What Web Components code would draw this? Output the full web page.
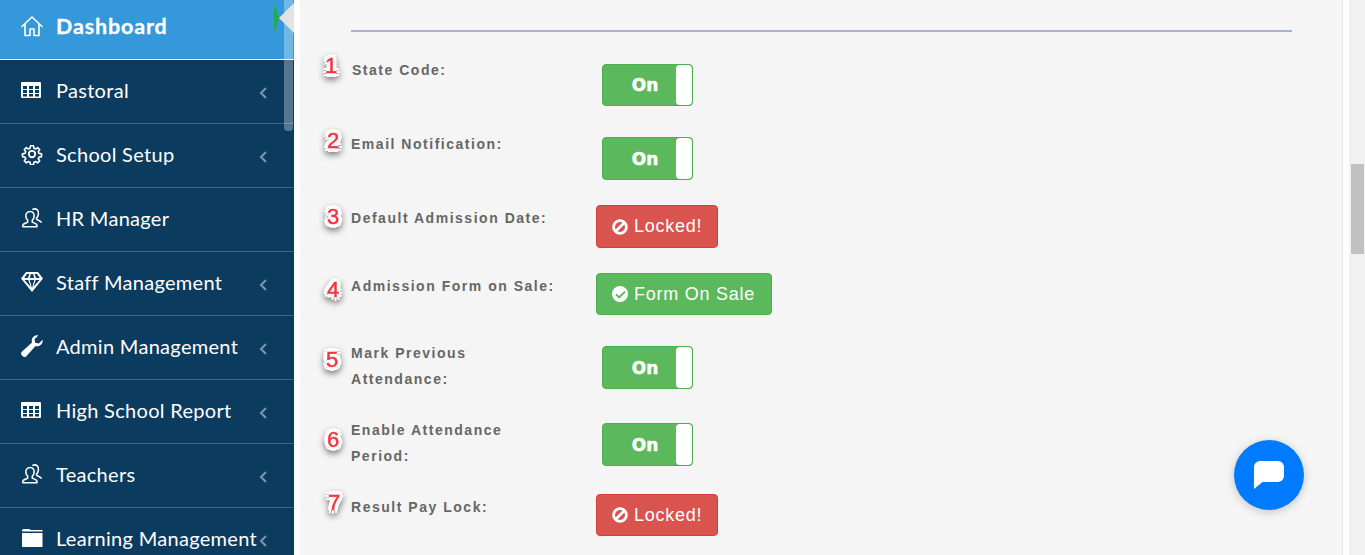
<!DOCTYPE html>
<html>
<head>
<meta charset="utf-8">
<title>Settings</title>
<style>
html, body { margin: 0; height: 100%; overflow: hidden; background: #fff; }
body { font-family: "Liberation Sans", Arial, sans-serif; }
</style>
</head>
<body>
<app-shell>
	<side-nav slot="nav">
		<nav-item icon="home" active>Dashboard</nav-item>
		<nav-item icon="table" arrow>Pastoral</nav-item>
		<nav-item icon="gear" arrow>School Setup</nav-item>
		<nav-item icon="users">HR Manager</nav-item>
		<nav-item icon="diamond" arrow>Staff Management</nav-item>
		<nav-item icon="wrench" arrow>Admin Management</nav-item>
		<nav-item icon="table" arrow>High School Report</nav-item>
		<nav-item icon="users" arrow>Teachers</nav-item>
		<nav-item icon="folder" arrow>Learning Management</nav-item>
	</side-nav>
	<settings-panel>
		<setting-row num="1" mark-x="-32" mark-y="-3" shift="1">
			State Code:
			<status-toggle slot="control" top="7"></status-toggle>
		</setting-row>
		<setting-row num="2" mark-x="-30" mark-y="-2">
			Email Notification:
			<status-toggle slot="control"></status-toggle>
		</setting-row>
		<setting-row num="3" mark-x="-30" mark-y="0">
			Default Admission Date:
			<status-button slot="control" kind="danger" icon="ban">Locked!</status-button>
		</setting-row>
		<setting-row num="4" mark-x="-30" mark-y="5">
			Admission Form on Sale:
			<status-button slot="control" kind="success" icon="check" short wide>Form On Sale</status-button>
		</setting-row>
		<setting-row num="5" mark-x="-31" mark-y="8">
			Mark Previous<br>Attendance:
			<status-toggle slot="control"></status-toggle>
		</setting-row>
		<setting-row num="6" mark-x="-30" mark-y="11">
			Enable Attendance<br>Period:
			<status-toggle slot="control"></status-toggle>
		</setting-row>
		<setting-row num="7" mark-x="-29" mark-y="-3">
			Result Pay Lock:
			<status-button slot="control" kind="danger" icon="ban" short>Locked!</status-button>
		</setting-row>
	</settings-panel>
	<chat-fab></chat-fab>
</app-shell>

<script>
const ICONS = {
	home: `<svg viewBox="0 0 24 24" width="24" height="24" fill="none" stroke="#fff" stroke-width="1.6" stroke-linejoin="round" stroke-linecap="round" style="margin-left:-1px"><path d="M2 12.500 12 3l10 9.500"/><path d="M5 10.500V21.500h5v-6.500h4v6.500h5V10.500"/></svg>`,
	table: `<svg viewBox="0 0 20 16" width="20" height="16"><rect width="20" height="16" rx="1" fill="#fff"/><path fill="#0b3b5e" d="M2 4h4v3H2zM8 4h4v3H8zM14 4h4v3h-4zM2 8h4v3H2zM8 8h4v3H8zM14 8h4v3h-4zM2 12h4v2.500H2zM8 12h4v2.500H8zM14 12h4v2.500h-4z"/></svg>`,
	gear: `<svg viewBox="0 0 24 24" width="22" height="22" fill="none" stroke="#fff" stroke-width="2" stroke-linejoin="round"><circle cx="12" cy="12" r="3.500"/><path d="M10.200 2h3.600l.5 3 2 .9 2.500-1.700 2.500 2.500-1.700 2.500.9 2 3 .5v3.600l-3 .5-.9 2 1.700 2.500-2.500 2.500-2.500-1.700-2 .9-.5 3h-3.600l-.5-3-2-.9-2.500 1.700-2.500-2.500 1.700-2.500-.9-2-3-.5v-3.600l3-.5.9-2-1.700-2.500 2.500-2.500 2.500 1.700 2-.9z" transform="translate(1.200 1.200) scale(.9)"/></svg>`,
	users: `<svg viewBox="0 0 24 24" width="22" height="22" fill="none" stroke="#fff" stroke-width="1.700" stroke-linejoin="round" stroke-linecap="round"><path d="M13 2.500c3.500-1.500 6.500 1 6 5-.2 2-1 3.500-2 4.500v1.500c1.500.8 4 1.500 5 3"/><path d="M10 5c3 0 4.800 2.200 4.300 5.500-.3 1.800-1 3-2 4v2c2 .8 3.700 1.500 4.700 2.500.6.700.5 2.500.5 2.500H2s-.2-1.800.5-2.500c1-1 2.800-1.700 4.800-2.500v-2c-1-1-1.700-2.200-2-4C4.800 7.200 7 5 10 5z"/></svg>`,
	diamond: `<svg viewBox="0 0 22 20" width="22" height="20"><path fill="#fff" d="M5 0h12l5 6.500L11 20 0 6.500z"/><path fill="#0b3b5e" d="M3.500 8h3.800l2.400 7zM8.700 8h4.600L11 16zM14.700 8h3.800l-6.200 7zM6 2h2.500L6.800 6H3.200zM10 2h2l1.300 4H8.700zM13.500 2H16l2.800 4h-3.600z"/></svg>`,
	wrench: `<svg viewBox="0 0 22 22" width="22" height="22"><path fill="#fff" d="M21.600 4.700c.3 2-.3 3.800-1.700 5.100-1.500 1.400-3.400 1.800-5.300 1.200L5.500 21a2.700 2.700 0 0 1-3.900.1l-.6-.6a2.700 2.700 0 0 1 .1-3.900L11 7.400c-.6-1.900-.2-3.800 1.200-5.300C13.500.7 15.300.1 17.300.4l-3.800 3.800.7 3.600 3.600.7z"/></svg>`,
	folder: `<svg viewBox="0 0 22 18" width="22" height="18"><path fill="#fff" d="M1 4h20.500v14H1zM2.500 0h6L9.500 1h12v1.500H1V1.500A1.500 1.500 0 0 1 2.500 0z"/></svg>`,
	ban: `<svg viewBox="0 0 16 16" width="16" height="16"><circle cx="8" cy="8" r="6.400" fill="none" stroke="#fff" stroke-width="2.800"/><path d="M3.500 12.500l9-9" stroke="#fff" stroke-width="2.600"/></svg>`,
	check: `<svg viewBox="0 0 16 16" width="16" height="16"><path fill="#fff" fill-rule="evenodd" d="M8 0a8 8 0 1 1 0 16A8 8 0 0 1 8 0zm4.400 4.900-5.300 5.200-2.500-2.400-1.300 1.300 3.800 3.800 6.600-6.600z"/></svg>`
};

class AppShell extends HTMLElement {
	constructor() {
		super();
		this.attachShadow({ mode: "open" }).innerHTML = `
		<style>
			:host { display: flex; height: 555px; position: relative; overflow: hidden; }
			.gutter { width: 16px; flex: none; background: #f1f1f1; position: relative; margin-left: 6px; }
			.thumb { position: absolute; left: 2px; right: 1px; top: 164px; height: 90px; background: #c1c1c1; }
		</style>
		<slot name="nav"></slot>
		<slot></slot>
		<div class="gutter"><div class="thumb"></div></div>`;
	}
}

class SideNav extends HTMLElement {
	constructor() {
		super();
		this.attachShadow({ mode: "open" }).innerHTML = `
		<style>
			:host { display: block; width: 294px; flex: none; height: 555px; background: #0b3b5e; position: relative; overflow: hidden; margin-right: 6px; font-family: Lato, "Open Sans", sans-serif; }
			.bar { position: absolute; left: 284px; top: -8px; width: 9px; height: 139px; border-radius: 4px; background: rgba(255,255,255,.3); }
			.notch { position: absolute; left: 279px; top: 3px; width: 15px; height: 30px; background: #e3e3e3; clip-path: polygon(0 50%, 100% 0, 100% 100%); }
			.flag { position: absolute; left: 274px; top: 3px; width: 5px; height: 30px; background: #22ab4a; clip-path: polygon(0 0, 100% 50%, 0 100%); }
		</style>
		<slot></slot>
		<div class="bar"></div>
		<div class="notch"></div>
		<div class="flag"></div>`;
	}
}

class NavItem extends HTMLElement {
	constructor() {
		super();
		this.attachShadow({ mode: "open" }).innerHTML = `
		<style>
			:host { display: flex; align-items: center; box-sizing: border-box; height: 64px; padding: 0 0 3px 21px; border-bottom: 1px solid #3f6480; color: #fff; font-size: 20px; letter-spacing: .3px; }
			:host([active]) { height: 60px; padding-bottom: 8px; background: #3498db; border-bottom-color: #fff; font-weight: 700; font-size: 21.500px; letter-spacing: .85px; -webkit-text-stroke: .3px #fff; }
			.icon { width: 35px; flex: none; display: flex; align-items: center; }
			.icon svg { display: block; }
			.label { flex: 1; white-space: nowrap; }
			.arrow { flex: none; width: 8px; margin: 5px 27px 0 0; }
			.arrow svg { display: block; }
		</style>
		<span class="icon"></span>
		<span class="label"><slot></slot></span>
		<span class="arrow"></span>`;
	}
	connectedCallback() {
		this.shadowRoot.querySelector(".icon").innerHTML = ICONS[this.getAttribute("icon")] || "";
		if (this.hasAttribute("arrow")) {
			this.shadowRoot.querySelector(".arrow").innerHTML = `<svg viewBox="0 0 8 12" width="8" height="12" fill="none" stroke="#7d97aa" stroke-width="2"><path d="M7 1 2 6l5 5"/></svg>`;
		}
	}
}

class SettingsPanel extends HTMLElement {
	constructor() {
		super();
		this.attachShadow({ mode: "open" }).innerHTML = `
		<style>
			:host { display: block; flex: 1; min-width: 0; box-sizing: border-box; height: 555px; padding: 30px 50px 0 51px; background: #f5f5f5; border-right: 1px solid #e7e7e7; }
			hr { margin: 0 0 25px; border: 0; height: 2px; background: #a4b3d0; }
		</style>
		<hr>
		<slot></slot>`;
	}
}

class SettingRow extends HTMLElement {
	constructor() {
		super();
		this.attachShadow({ mode: "open" }).innerHTML = `
		<style>
			:host { display: flex; align-items: flex-start; position: relative; margin-bottom: 25px; }
			.label { width: 245px; flex: none; box-sizing: border-box; font: 700 14px/26px "Liberation Sans", Arial, sans-serif; letter-spacing: 1.520px; color: #666; }
			.mark { position: absolute; font: 400 22px/24px "Liberation Sans", Arial, sans-serif; color: #f5343c; width: 24px; text-align: center; -webkit-text-stroke: .5px #f5343c;
				filter: drop-shadow(0 3px 3px rgba(0,0,0,.5));
				text-shadow: -4px 0 #fff, 4px 0 #fff, 0 -4px #fff, 0 4px #fff, -3px -3px #fff, 3px -3px #fff, -3px 3px #fff, 3px 3px #fff, -2px 0 #fff, 2px 0 #fff, 0 -2px #fff, 0 2px #fff; }
		</style>
		<div class="label"><slot></slot></div>
		<slot name="control"></slot>
		<span class="mark"></span>`;
	}
	connectedCallback() {
		const mark = this.shadowRoot.querySelector(".mark");
		mark.textContent = this.getAttribute("num");
		mark.style.left = this.getAttribute("mark-x") + "px";
		mark.style.top = this.getAttribute("mark-y") + "px";
		if (this.hasAttribute("shift")) {
			this.shadowRoot.querySelector(".label").style.paddingLeft = this.getAttribute("shift") + "px";
		}
	}
}

class StatusToggle extends HTMLElement {
	constructor() {
		super();
		this.attachShadow({ mode: "open" }).innerHTML = `
		<style>
			:host { display: flex; box-sizing: border-box; width: 91px; height: 43px; margin: 6px 0 0 6px; border: 1px solid #4cae4c; border-radius: 4px; background: #5cb85c; overflow: hidden; }
			:host([top="7"]) { height: 42px; margin-top: 7px; }
			.text { flex: 1; display: flex; align-items: center; justify-content: center; padding-left: 11px; font: 700 17px "DejaVu Sans", sans-serif; -webkit-text-stroke: .5px #fff; color: #fff; }
			.handle { width: 16px; flex: none; background: #fff; border-radius: 4px; }
		</style>
		<div class="text">On</div>
		<div class="handle"></div>`;
	}
}

class StatusButton extends HTMLElement {
	constructor() {
		super();
		this.attachShadow({ mode: "open" }).innerHTML = `
		<style>
			:host { display: inline-flex; align-items: center; gap: 6px; box-sizing: border-box; height: 43px; padding: 0 15px; border: 1px solid; border-radius: 4px; color: #fff; font: 400 18px "Liberation Sans", Arial, sans-serif; letter-spacing: .75px; white-space: nowrap; }
			:host([short]) { height: 42px; }
			:host([wide]) { padding-right: 16px; }
			:host([kind="danger"]) { background: #d9534f; border-color: #d43f3a; }
			:host([kind="success"]) { background: #5cb85c; border-color: #4cae4c; }
			.icon { display: flex; }
		</style>
		<span class="icon"></span>
		<slot></slot>`;
	}
	connectedCallback() {
		this.shadowRoot.querySelector(".icon").innerHTML = ICONS[this.getAttribute("icon")] || "";
	}
}

class ChatFab extends HTMLElement {
	constructor() {
		super();
		this.attachShadow({ mode: "open" }).innerHTML = `
		<style>
			:host { position: absolute; left: 1234px; top: 440px; width: 70px; height: 70px; border-radius: 50%; background: #007bff; box-shadow: 0 2px 10px rgba(0,0,0,.2); display: flex; align-items: center; justify-content: center; }
			svg { display: block; }
		</style>
		<svg viewBox="0 0 30 28" width="30" height="28"><path fill="#fff" d="M6 0h18a6 6 0 0 1 6 6v9a6 6 0 0 1-6 6H8.500L0 28V6a6 6 0 0 1 6-6z"/></svg>`;
	}
}

customElements.define("app-shell", AppShell);
customElements.define("side-nav", SideNav);
customElements.define("nav-item", NavItem);
customElements.define("settings-panel", SettingsPanel);
customElements.define("setting-row", SettingRow);
customElements.define("status-toggle", StatusToggle);
customElements.define("status-button", StatusButton);
customElements.define("chat-fab", ChatFab);
</script>
</body>
</html>
